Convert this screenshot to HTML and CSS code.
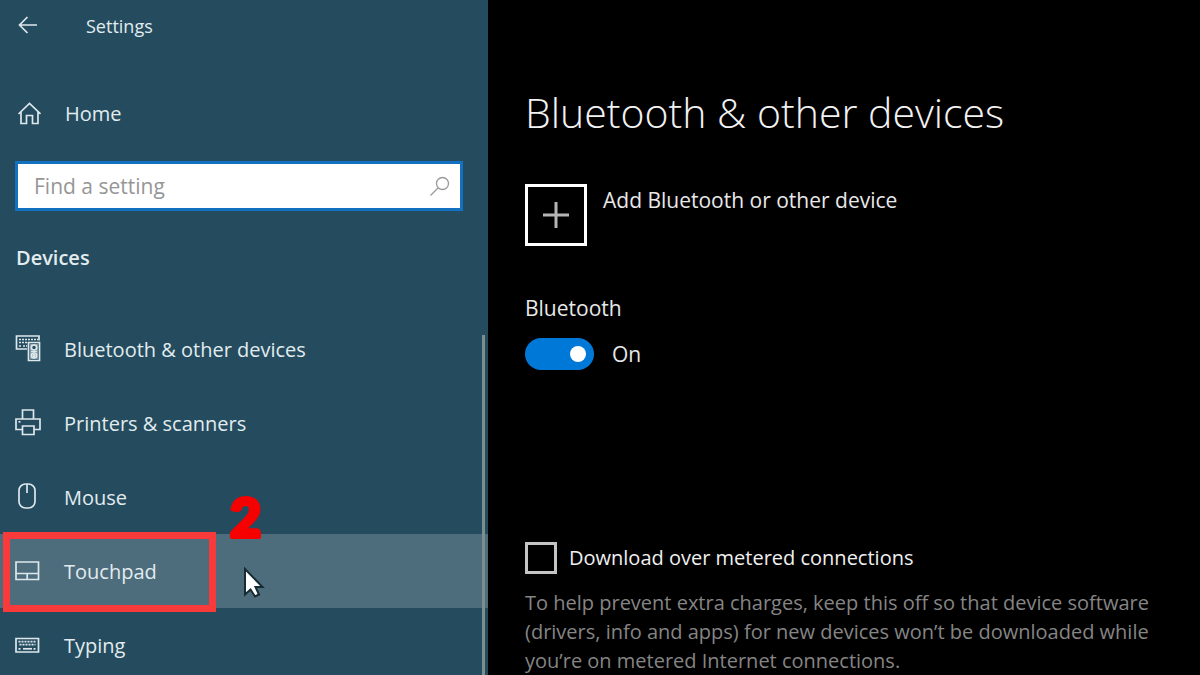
FILE: index.html
```html
<!DOCTYPE html>
<html lang="en">
<head>
<meta charset="utf-8">
<meta name="viewport" content="width=device-width, initial-scale=1">
<title>Settings</title>
<link rel="stylesheet" href="styles.css">
</head>
<body>
<div class="window">
  <aside class="sidebar">
    <header class="titlebar">
      <button class="back" type="button" aria-label="Back">
        <svg class="icon" width="20" height="20" viewBox="0 0 20 20"><path d="M19 9H1.500M9.500 1L1.500 9l8 8"/></svg>
      </button>
      <span class="title">Settings</span>
    </header>
    <a class="home" href="#">
      <svg class="icon" width="24" height="24" viewBox="0 0 24 24"><path d="M1.500 12L12.500 1.500l11 10.500M4 10V21.500H9.500V13.500h6v8h5.500V10"/></svg>
      <span>Home</span>
    </a>
    <form class="search">
      <input class="search-input" type="text" placeholder="Find a setting" aria-label="Find a setting">
      <svg class="search-icon" width="22" height="22" viewBox="0 0 22 22"><circle cx="14.500" cy="8.500" r="6"/><path d="M10 13L2.500 20.500"/></svg>
    </form>
    <h2 class="group">Devices</h2>
    <nav class="nav">
      <a class="item" href="#">
        <svg class="icon" width="28" height="28" viewBox="0 0 28 28"><path d="M13 14H2.500V1H25v4.500M14.500 7.500h11v18h-11z"/><path class="dots" d="M5 4.500h19M5 7.500h8M5 11h3M9 11h4"/><circle cx="20" cy="12.500" r="2.600"/><circle cx="20" cy="20.500" r="2.600"/><circle cx="20" cy="20.500" r="1"/><path class="fine" d="M17 9v15M23 9v15M17 16.500h6"/></svg>
        <span class="name">Bluetooth &amp; other devices</span>
      </a>
      <a class="item" href="#">
        <svg class="icon" width="28" height="28" viewBox="0 0 28 28"><path d="M8.500 10V1h11v9M8 20.500H2V10h24v10.500h-6M8.500 17h11.500v8.500H8.500z"/><path d="M4.500 12.800h2"/></svg>
        <span class="name">Printers &amp; scanners</span>
      </a>
      <a class="item" href="#">
        <svg class="icon" width="28" height="28" viewBox="0 0 28 28"><rect x="5" y="1" width="16" height="24" rx="6.500"/><path d="M13 1v9"/></svg>
        <span class="name">Mouse</span>
      </a>
      <a class="item current" href="#">
        <svg class="icon" width="28" height="28" viewBox="0 0 28 28"><path d="M2 5h22.500v17.500H2zM2 16.500h22.500M13.200 16.500v6"/></svg>
        <span class="name">Touchpad</span>
        <span class="frame"></span>
        <svg class="step" width="60" height="80" viewBox="0 0 60 80"><text x="13" y="59">2</text></svg>
        <svg class="pointer" width="22" height="32" viewBox="0 0 22 32"><path d="M2 2v25.500l5.500-5 4.500 7 4-2-3.500-7.500h7z"/></svg>
      </a>
      <a class="item" href="#">
        <svg class="icon" width="28" height="28" viewBox="0 0 28 28"><path d="M2 7.500h22.500v13.500H2z"/><path class="dots" d="M4.500 10.700h18M5.500 13.700h16M4.500 17.800h3M19.500 17.800h3"/><path d="M9 17.800h9"/></svg>
        <span class="name">Typing</span>
      </a>
    </nav>
  </aside>
  <main class="content">
    <h1 class="heading">Bluetooth &amp; other devices</h1>
    <button class="add" type="button">
      <span class="add-box"><svg width="26" height="26" viewBox="0 0 26 26"><path d="M13 0v26M0 13h26"/></svg></span>
      <span class="add-text">Add Bluetooth or other device</span>
    </button>
    <section class="bluetooth">
      <label class="label" for="bt">Bluetooth</label>
      <div class="switch-row">
        <input class="switch" id="bt" type="checkbox" role="switch" checked>
        <span>On</span>
      </div>
    </section>
    <section class="metered">
      <div class="check-row">
        <input class="check" id="metered" type="checkbox">
        <label for="metered">Download over metered connections</label>
      </div>
      <p class="hint">To help prevent extra charges, keep this off so that device software (drivers, info and apps) for new devices won’t be downloaded while you’re on metered Internet connections.</p>
    </section>
  </main>
</div>
</body>
</html>
```
FILE: styles.css
```css
* { box-sizing: border-box; }

body {
  margin: 0;
  background: #000;
  color: #e8e8e8;
  font: 20px/28px "Open Sans", "Noto Sans", sans-serif;
}

a { color: inherit; text-decoration: none; }
button, input { font: inherit; color: inherit; }
button { padding: 0; border: 0; background: none; text-align: left; }

.window {
  display: grid;
  grid-template-columns: 61fr 89fr;
  height: 100vh;
  overflow: hidden;
}

.icon { flex: none; fill: none; stroke: #dde8ec; stroke-width: 1.7; }
.icon .dots { stroke-dasharray: 2 1; }
.icon .fine { stroke-width: 1; }

.sidebar {
  display: flex;
  flex-direction: column;
  min-width: 0;
  background: #244b5e;
  color: #e2ecef;
}

.titlebar {
  display: flex;
  align-items: center;
  gap: 48px;
  height: 52px;
  padding-left: 18px;
  font-size: 18px;
}

.back { display: flex; }

.home {
  display: flex;
  align-items: center;
  gap: 24px;
  margin-top: 40px;
  padding: 8px 0 8px 17px;
}

.search {
  display: flex;
  align-items: center;
  height: 50px;
  margin: 25px 25px 0 15px;
  padding: 0 10px 0 16px;
  border: 3px solid #1271c0;
  background: #fff;
  font-size: 21px;
}

.search-input {
  flex: 1;
  min-width: 0;
  padding: 0;
  border: 0;
  outline: 0;
  background: none;
  color: #333;
}

.search-input::placeholder { color: #969696; opacity: 1; }
.search-icon { fill: none; stroke: #999; stroke-width: 1.3; }

.group {
  margin: 33px 0 0 16px;
  font-size: 20px;
  font-weight: 600;
  line-height: 28px;
}

.nav { position: relative; margin-top: 40px; }

.nav::after {
  content: "";
  position: absolute;
  z-index: 2;
  top: 23px;
  right: 3px;
  bottom: 0;
  width: 3px;
  background: #7c8e8d;
}

.item {
  position: relative;
  display: flex;
  align-items: center;
  gap: 22px;
  height: 74px;
  padding-left: 14px;
}

.name { padding-top: 2px; }

.current { background: #4d6c7c; z-index: 1; }

.frame {
  position: absolute;
  top: -2px;
  left: 3px;
  width: 213px;
  height: 80px;
  border: 7px solid #f93a3b;
}

.step {
  position: absolute;
  top: -56px;
  left: 217px;
  fill: #f60000;
  stroke: #f60000;
  stroke-width: 4;
  stroke-linejoin: round;
  font: 900 54px Lato, sans-serif;
}

.pointer { position: absolute; top: 33px; left: 243px; fill: #fff; stroke: #172b35; stroke-width: 2; }

.content { min-width: 0; padding: 84px 24px 0 37px; }

.heading {
  margin: 0;
  color: #f2f2f2;
  font-size: 41px;
  font-weight: 300;
  line-height: 56px;
}

.add { display: flex; gap: 16px; margin-top: 44px; font-size: 21px; }

.add-box {
  display: grid;
  place-items: center;
  width: 62px;
  height: 62px;
  border: 3px solid #fff;
}

.add-box svg { stroke: #b5b5b5; stroke-width: 3; }
.add-text { margin-top: 2px; }

.bluetooth { margin-top: 48px; font-size: 21px; }
.label { display: block; }

.switch-row {
  display: flex;
  align-items: center;
  gap: 18px;
  margin-top: 16px;
}

.switch {
  appearance: none;
  display: flex;
  justify-content: flex-end;
  align-items: center;
  width: 69px;
  height: 32px;
  margin: 0;
  padding-right: 8px;
  border-radius: 16px;
  background: #0078d7;
}

.switch::before {
  content: "";
  width: 16px;
  height: 16px;
  border-radius: 50%;
  background: #fff;
}

.metered { margin-top: 172px; }
.check-row { display: flex; align-items: center; gap: 12px; color: #f0f0f0; }

.check {
  appearance: none;
  width: 32px;
  height: 32px;
  margin: 0;
  border: 3px solid #c4c4c4;
}

.hint { margin: 14px 0 0; color: #858585; line-height: 29px; }
```
